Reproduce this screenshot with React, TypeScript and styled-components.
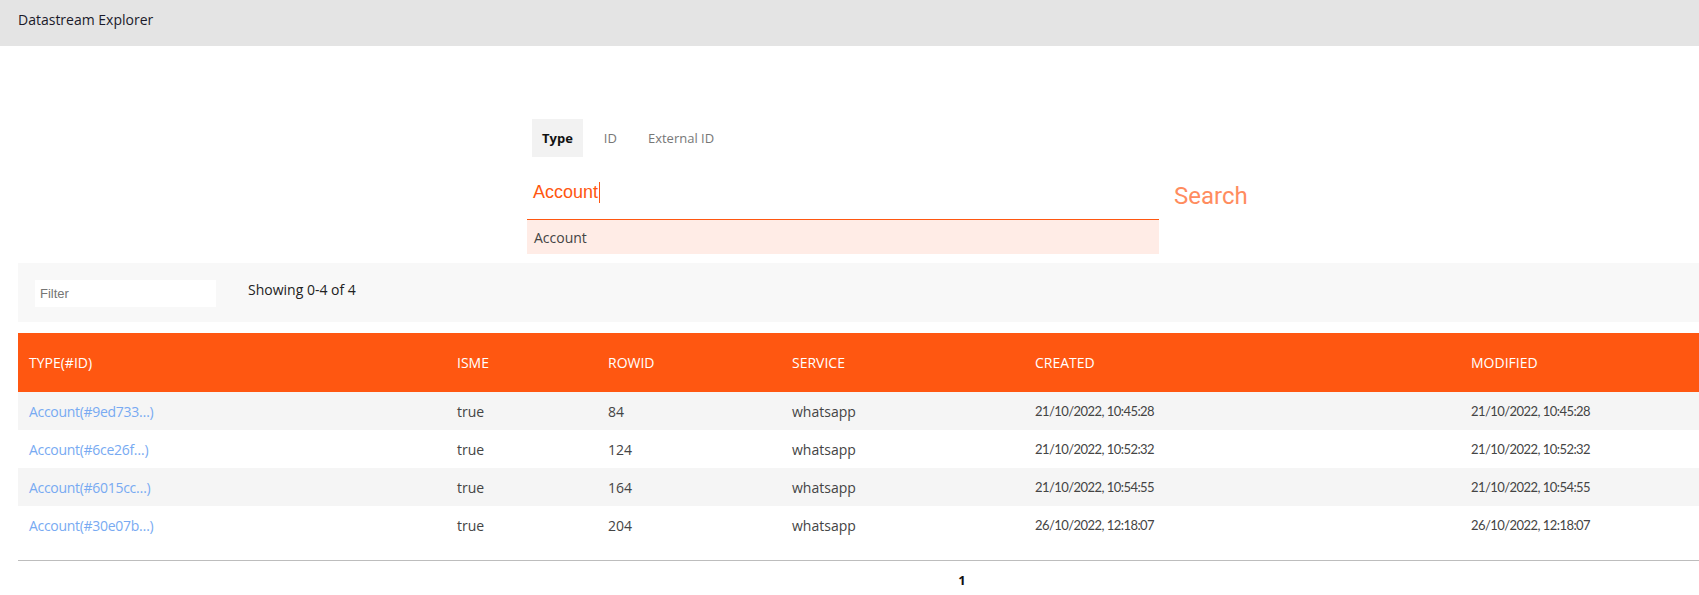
import React from 'react'
import styled, { createGlobalStyle } from 'styled-components'

const GlobalStyle = createGlobalStyle`
  html, body {
    margin: 0;
    padding: 0;
    background: #ffffff;
    overflow-x: hidden;
  }
  body {
    font-family: 'Open Sans', 'Noto Sans', sans-serif;
    font-size: 14px;
    color: #222;
  }
`

const orange = '#ff5711'

const TopBar = styled.header`
  height: 46px;
  background: #e4e4e4;
  padding: 10px 0 0 18px;
  box-sizing: border-box;
  color: #1a1a2a;
`

const SearchArea = styled.section`
  display: flex;
  align-items: flex-start;
  padding: 73px 0 0 527px;
`

const SearchBlock = styled.div`
  width: 632px;
  display: flex;
  flex-direction: column;
`

const Tabs = styled.nav`
  display: flex;
  gap: 11px;
  margin-left: 5px;
`

const Tab = styled.button<{ active?: boolean }>`
  height: 38px;
  padding: 0 10px;
  border: none;
  background: ${({ active }) => (active ? '#f2f2f2' : 'transparent')};
  font-family: 'Open Sans', 'Noto Sans', sans-serif;
  font-size: 13px;
  font-weight: ${({ active }) => (active ? 700 : 400)};
  color: ${({ active }) => (active ? '#111' : '#777')};
  cursor: pointer;
`

const QueryInput = styled.div`
  margin-top: 17px;
  height: 46px;
  padding: 8px 6px 0;
  box-sizing: border-box;
  display: flex;
  align-items: flex-start;
  border-bottom: 1px solid ${orange};
  font-family: 'Liberation Sans', Arial, sans-serif;
  font-size: 18px;
  color: ${orange};
  span {
    display: inline-block;
    width: 1px;
    height: 21px;
    margin-left: 1px;
    background: ${orange};
  }
`

const Suggestion = styled.div`
  height: 34px;
  display: flex;
  align-items: center;
  padding-left: 7px;
  background: #ffece6;
  color: #444;
  font-size: 14px;
`

const SearchButton = styled.button`
  margin: 63px 0 0 15px;
  padding: 0;
  border: none;
  background: none;
  font-family: Roboto, sans-serif;
  font-size: 24px;
  color: #ff8c5e;
  cursor: pointer;
`

const Content = styled.main`
  width: 1888px;
  margin: 9px 0 0 18px;
`

const FilterBar = styled.div`
  height: 59px;
  background: #f8f8f8;
  display: flex;
  align-items: flex-start;
  padding: 17px 0 0 17px;
  box-sizing: border-box;
`

const FilterInput = styled.input`
  width: 181px;
  height: 27px;
  box-sizing: border-box;
  border: none;
  outline: none;
  background: #fff;
  padding: 0 5px;
  font-family: 'Liberation Sans', Arial, sans-serif;
  font-size: 13px;
  &::placeholder {
    color: #757575;
  }
`

const Count = styled.div`
  margin: 0 0 0 32px;
  color: #222;
`

const Table = styled.table`
  width: 100%;
  margin-top: 11px;
  border-collapse: collapse;
  table-layout: fixed;
  border-bottom: 1px solid #bdbdbd;
`

const HeadCell = styled.th`
  height: 59px;
  padding: 0 11px;
  background: ${orange};
  color: #fff;
  text-align: left;
  font-weight: 500;
  font-size: 14px;
  text-transform: uppercase;
`

const Row = styled.tr`
  height: 38px;
  &:nth-child(odd) {
    background: #f5f5f5;
  }
`

const Cell = styled.td<{ numeric?: boolean }>`
  padding: 0 11px;
  color: #444;
  white-space: nowrap;
  font-family: ${({ numeric }) =>
    numeric ? "Lato, 'Open Sans', sans-serif" : "'Open Sans', 'Noto Sans', sans-serif"};
  font-size: ${({ numeric }) => (numeric ? '13px' : '14px')};
  letter-spacing: ${({ numeric }) => (numeric ? '-0.55px' : 'normal')};
`

const Spacer = styled.tr`
  height: 16px;
`

const IdLink = styled.a`
  color: #78aaf2;
  text-decoration: none;
  letter-spacing: -0.3px;
`

const Pager = styled.div`
  text-align: center;
  padding-top: 10px;
  font-size: 13px;
  font-weight: 700;
  color: #111;
`

const columns = [
  { key: 'type', label: 'Type(#id)', width: 428 },
  { key: 'isMe', label: 'isMe', width: 151 },
  { key: 'rowId', label: 'rowId', width: 184 },
  { key: 'service', label: 'service', width: 243 },
  { key: 'created', label: 'created', width: 436 },
  { key: 'modified', label: 'modified', width: 446 },
]

const rows = [
  { id: '9ed733', rowId: 84, created: '21/10/2022, 10:45:28' },
  { id: '6ce26f', rowId: 124, created: '21/10/2022, 10:52:32' },
  { id: '6015cc', rowId: 164, created: '21/10/2022, 10:54:55' },
  { id: '30e07b', rowId: 204, created: '26/10/2022, 12:18:07' },
]

const App = () => {
  return (
    <>
      <GlobalStyle />
      <TopBar>Datastream Explorer</TopBar>
      <SearchArea>
        <SearchBlock>
          <Tabs>
            <Tab active>Type</Tab>
            <Tab>ID</Tab>
            <Tab>External ID</Tab>
          </Tabs>
          <QueryInput>
            Account<span />
          </QueryInput>
          <Suggestion>Account</Suggestion>
        </SearchBlock>
        <SearchButton>Search</SearchButton>
      </SearchArea>
      <Content>
        <FilterBar>
          <FilterInput placeholder="Filter" />
          <Count>Showing 0-4 of 4</Count>
        </FilterBar>
        <Table>
          <colgroup>
            {columns.map((c) => (
              <col key={c.key} style={{ width: c.width }} />
            ))}
          </colgroup>
          <thead>
            <tr>
              {columns.map((c) => (
                <HeadCell key={c.key}>{c.label}</HeadCell>
              ))}
            </tr>
          </thead>
          <tbody>
            {rows.map((r) => (
              <Row key={r.id}>
                <Cell>
                  <IdLink href="#">Account(#{r.id}…)</IdLink>
                </Cell>
                <Cell>true</Cell>
                <Cell>{r.rowId}</Cell>
                <Cell>whatsapp</Cell>
                <Cell numeric>{r.created}</Cell>
                <Cell numeric>{r.created}</Cell>
              </Row>
            ))}
            <Spacer />
          </tbody>
        </Table>
        <Pager>1</Pager>
      </Content>
    </>
  )
}

export default App
